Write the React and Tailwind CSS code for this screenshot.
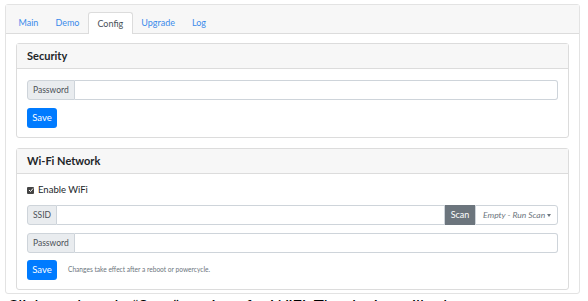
import React from "react";

const tabs = ["Main", "Demo", "Config", "Upgrade", "Log"];

const InputGroup = ({ label, children }) => (
  <div className="flex h-[20px] w-full">
    <div className="flex items-center px-[5px] bg-[#e9ecef] border border-[#ced4da] rounded-l-[3px] text-[8.5px] text-[#495057]">
      {label}
    </div>
    {children || (
      <div className="flex-1 border border-l-0 border-[#ced4da] rounded-r-[3px] bg-white"></div>
    )}
  </div>
);

const SaveButton = () => (
  <button className="h-[20px] w-[30px] rounded-[3px] bg-[#007bff] text-white text-[9.5px] flex items-center justify-center">
    Save
  </button>
);

const Card = ({ title, children }) => (
  <div className="border border-[#dcdcdc] rounded-[3px] bg-white">
    <div className="h-[25px] flex items-center px-[10px] bg-[#f7f7f7] border-b border-[#dcdcdc] text-[11px] font-bold text-[#212529]">
      {title}
    </div>
    <div className="px-[10px] pt-[11px] pb-[9px] flex flex-col">{children}</div>
  </div>
);

export default function App() {
  return (
    <div
      className="w-[588px] h-[301px] overflow-hidden bg-white pt-[4px] pl-[5px]"
      style={{ fontFamily: 'Lato, "Noto Sans", sans-serif' }}
    >
      <div className="w-[575px] border border-[#e3e3e3] rounded-[3px]">
        {/* tab header */}
        <div className="h-[29px] bg-[#f7f7f7] border-b border-[#dcdcdc] flex items-end px-[4px]">
          {tabs.map((t) => (
            <div
              key={t}
              className={
                t === "Config"
                  ? "h-[22px] px-[8.5px] pt-[1px] flex items-center bg-white border border-[#dcdcdc] border-b-0 rounded-t-[3px] -mb-px text-[9px] text-[#495057]"
                  : "h-[22px] px-[8.5px] pt-[1px] flex items-center text-[9px] text-[#3b8beb]"
              }
            >
              {t}
            </div>
          ))}
        </div>

        <div className="pt-[9px] px-[10px] pb-[3px] flex flex-col gap-[10px]">
          <Card title="Security">
            <InputGroup label="Password" />
            <div className="mt-[8px]">
              <SaveButton />
            </div>
          </Card>

          <Card title="Wi-Fi Network">
            <div className="flex items-center gap-[4px] h-[12px] -mt-[1px] text-[9.5px] text-[#212529]">
              <span className="w-[7px] h-[7px] bg-[#444] rounded-[1px] flex items-center justify-center">
                <svg width="6" height="6" viewBox="0 0 6 6">
                  <path d="M1 3 L2.5 4.5 L5 1.5" stroke="white" strokeWidth="1" fill="none" />
                </svg>
              </span>
              Enable WiFi
            </div>
            <div className="mt-[9px]">
              <InputGroup label="SSID">
                <div className="flex-1 border border-l-0 border-[#ced4da] bg-white"></div>
                <div className="w-[30px] flex items-center justify-center bg-[#6c757d] text-white text-[9px]">
                  Scan
                </div>
                <div className="w-[83px] flex items-center justify-between pl-[7px] pr-[6px] bg-white border border-[#ced4da] rounded-r-[3px] text-[8.5px] italic text-[#6c757d] whitespace-nowrap">
                  <span>Empty - Run Scan</span>
                  <span className="border-t-[3px] border-t-[#6c757d] border-x-[2.5px] border-x-transparent"></span>
                </div>
              </InputGroup>
            </div>
            <div className="mt-[8px]">
              <InputGroup label="Password" />
            </div>
            <div className="mt-[7px] flex items-center gap-[11px]">
              <SaveButton />
              <span className="text-[6.6px] text-[#6c757d]">
                Changes take effect after a reboot or powercycle.
              </span>
            </div>
          </Card>
        </div>
      </div>
      <div className="mt-[4px] ml-[2px] text-[17px] text-black whitespace-nowrap leading-[17px]">
        Click on the tab, “Save” settings for WiFi. The device will reboot.
      </div>
    </div>
  );
}
